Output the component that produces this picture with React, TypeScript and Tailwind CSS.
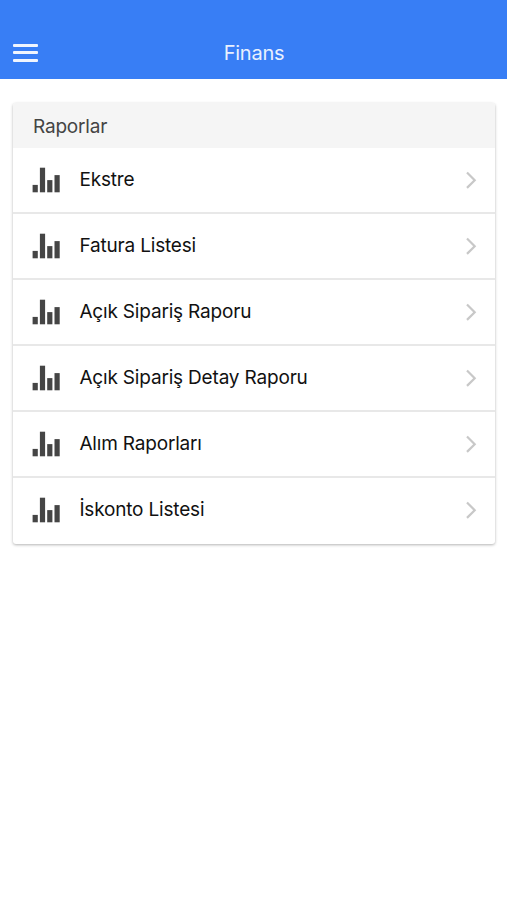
import React from 'react';

type ReportRowProps = {
	title: string;
};

const reports = [
	'Ekstre',
	'Fatura Listesi',
	'Açık Sipariş Raporu',
	'Açık Sipariş Detay Raporu',
	'Alım Raporları',
	'İskonto Listesi',
];

function StatsIcon() {
	return (
		<svg width="28" height="26" viewBox="0 0 28 26" fill="#454545">
			<rect x="0.6" y="17.9" width="5.2" height="7.4" />
			<rect x="7.9" y="0.7" width="5.2" height="24.6" />
			<rect x="15.2" y="13.1" width="5.2" height="12.2" />
			<rect x="22.5" y="8.1" width="5.2" height="17.2" />
		</svg>
	);
}

function ReportRow({ title }: ReportRowProps) {
	return (
		<li className="flex h-[66px] items-center border-b-2 border-[#e8e8e8] pr-[18px] pl-[19px] last:h-[65.5px] last:border-b-0 last:pb-[1.5px]">
			<StatsIcon />
			<span className="ml-[19.4px] flex-1 text-[19px] leading-6 tracking-[-0.18px] text-[#111]">
				{title}
			</span>
			<svg
				width="12"
				height="18"
				viewBox="0 0 12 18"
				fill="none"
				stroke="#c8c8c8"
				strokeWidth="2.2"
			>
				<path d="M2 1.5L9.7 9.2L2 16.9" />
			</svg>
		</li>
	);
}

export default function App() {
	return (
		<div className="min-h-screen bg-white font-['Inter',sans-serif]">
			<header className="grid h-[79px] grid-cols-3 items-center bg-[#387ef5] px-[13px] pt-[26px]">
				<button className="flex w-[25px] flex-col gap-[4.5px]" aria-label="Menu">
					<span className="h-[3px] w-full rounded-[1px] bg-[#f0f5fe]" />
					<span className="h-[3px] w-full rounded-[1px] bg-[#f0f5fe]" />
					<span className="h-[3px] w-full rounded-[1px] bg-[#f0f5fe]" />
				</button>
				<h1 className="pl-px text-center text-[20px] leading-6 tracking-[-0.25px] text-[#e8f0fe]">
					Finans
				</h1>
			</header>

			<main className="pt-6 pr-3 pl-[13px]">
				<section className="overflow-hidden rounded-[3px] bg-white shadow-[0_1px_3px_rgba(0,0,0,0.3)]">
					<h2 className="h-[45px] bg-[#f5f5f5] pl-5 text-[19px] leading-[47px] tracking-[-0.19px] text-[#444]">
						Raporlar
					</h2>
					<ul>
						{reports.map((title) => (
							<ReportRow key={title} title={title} />
						))}
					</ul>
				</section>
			</main>
		</div>
	);
}
